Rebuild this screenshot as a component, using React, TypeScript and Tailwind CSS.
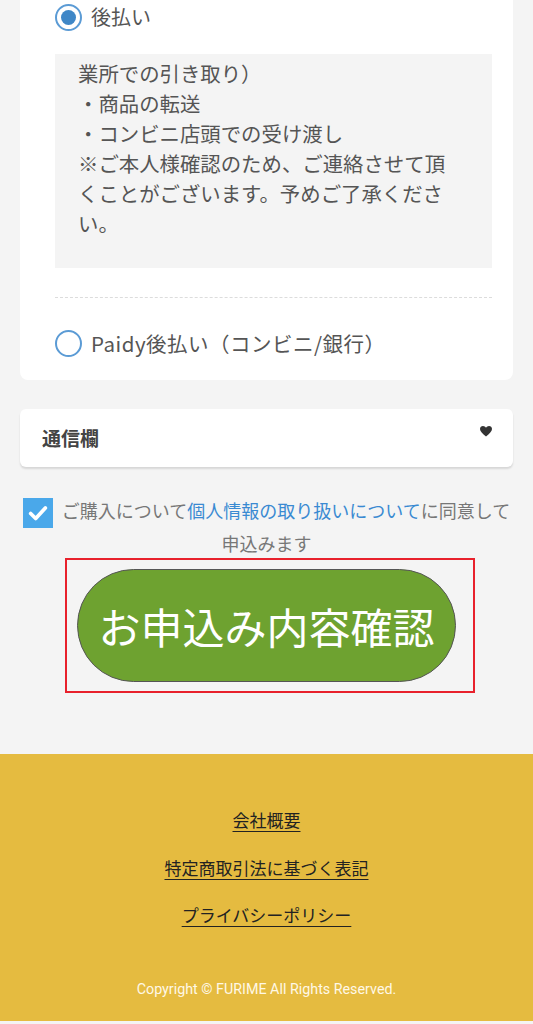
const jp = { fontFamily: '"Noto Sans CJK JP", "Noto Sans", sans-serif' }

function Radio({ checked }: { checked?: boolean }) {
  return (
    <span className="flex h-[27px] w-[27px] shrink-0 items-center justify-center rounded-full border-2 border-[#5b9bd5] bg-white">
      {checked && <span className="h-[15px] w-[15px] rounded-full bg-[#3f87c7]" />}
    </span>
  )
}

export default function App() {
  const notes = [
    '業所での引き取り）',
    '・商品の転送',
    '・コンビニ店頭での受け渡し',
    '※ご本人様確認のため、ご連絡させて頂',
    'くことがございます。予めご了承くださ',
    'い。',
  ]

  return (
    <div className="min-h-[1024px] bg-[#f4f4f4] text-[#555]" style={jp}>
      {/* payment options card */}
      <div className="mx-[20px] rounded-b-lg bg-white pb-[20px] pl-[35px] pr-[21px]">
        <div className="flex h-[34px] items-center gap-[9px]">
          <Radio checked />
          <span className="text-[20px] leading-none">後払い</span>
        </div>
        <div className="mt-[20px] bg-[#f4f4f4] pb-[30px] pl-[23px] pr-[20px] pt-[4px] text-[20.4px] leading-[30px] text-[#555]">
          {notes.map(line => (
            <div key={line} className="whitespace-nowrap">{line}</div>
          ))}
        </div>
        <div className="mt-[29px] border-t border-dashed border-[#dcdcdc]" />
        <div className="mt-[28px] flex h-[34px] items-center gap-[9px]">
          <Radio />
          <span className="text-[20.5px] leading-none tracking-[0.5px]">Paidy後払い（コンビニ/銀行）</span>
        </div>
      </div>

      {/* message field */}
      <div className="mx-[20px] mt-[29px] flex h-[58px] items-center justify-between rounded-md bg-white pl-[22px] pr-[21px] shadow-[0_2px_2px_rgba(0,0,0,0.12)]">
        <span className="text-[19px] font-bold text-[#444]">通信欄</span>
        <svg width="12" height="11" viewBox="0 0 24 22" className="-mt-[14px]">
          <path d="M12 21 C5 15 0 11 0 6 C0 2.5 2.7 0 6 0 C8.5 0 10.6 1.4 12 3.5 C13.4 1.4 15.5 0 18 0 C21.3 0 24 2.5 24 6 C24 11 19 15 12 21 Z" fill="#333" />
        </svg>
      </div>

      {/* consent */}
      <p className="mx-[20px] mt-[28px] text-center text-[18px] leading-[30px] text-[#777]">
        <span className="mr-[9px] inline-flex h-[30px] w-[30px] items-center justify-center bg-[#4aa8ea] align-middle">
          <svg width="22" height="22" viewBox="0 0 24 24" fill="none" stroke="#fff" strokeWidth="4" strokeLinecap="round" strokeLinejoin="round">
            <path d="M4 12.5 L9.5 18 L20 6.5" />
          </svg>
        </span>
        ご購入について<span className="text-[#3a8ad2]">個人情報の取り扱いについて</span>に同意して
        <br />
        申込みます
      </p>

      {/* submit */}
      <div className="ml-[65px] w-[410px] border-2 border-[#e8212c] pb-[9px] pl-[10px] pt-[9px]">
        <button className="flex h-[113px] w-[379px] items-center justify-center rounded-full border border-[#555] bg-[#6ea230] text-[42px] text-white">
          お申込み内容確認
        </button>
      </div>

      {/* footer */}
      <footer className="mt-[61px] flex h-[267px] flex-col items-center bg-[#e5bb40] pt-[53px] text-[17px] text-[#222]">
        <a className="underline underline-offset-[4px]">会社概要</a>
        <a className="mt-[22px] underline underline-offset-[4px]">特定商取引法に基づく表記</a>
        <a className="mt-[22px] underline underline-offset-[4px]">プライバシーポリシー</a>
        <p className="mt-[51px] text-[14.3px] text-[#fff8e6]" style={{ fontFamily: 'Roboto, "Noto Sans", sans-serif' }}>
          Copyright © FURIME All Rights Reserved.
        </p>
      </footer>
    </div>
  )
}
